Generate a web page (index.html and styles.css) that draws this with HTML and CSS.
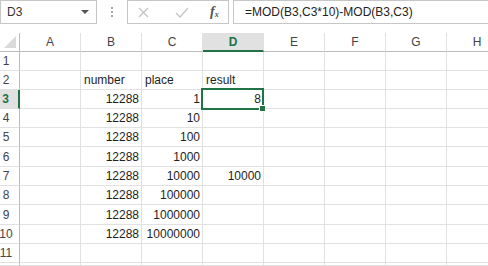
FILE: index.html
```html
<!DOCTYPE html>
<html lang="en">
<head>
  <meta charset="UTF-8" />
  <title>MOD</title>
  <link rel="stylesheet" href="styles.css">
</head>
<body>
  <div class="formula-bar">
    <div class="name-box">
      <span>D3</span>
      <span class="arrow"></span>
    </div>
    <div class="grip"><i></i><i></i><i></i></div>
    <div class="buttons">
      <svg class="btn-cancel" width="11" height="11" viewBox="0 0 11 11"><path d="M1 1L10 10M10 1L1 10" stroke="#c4c4c4" stroke-width="1.3" fill="none"/></svg>
      <svg class="btn-enter" width="14" height="11" viewBox="0 0 14 11"><path d="M1 6L5 10L13 1" stroke="#c4c4c4" stroke-width="1.3" fill="none"/></svg>
      <span class="fx"><i>f</i><sub>x</sub></span>
    </div>
    <div class="formula">=MOD(B3,C3*10)-MOD(B3,C3)</div>
  </div>

  <div class="sheet" id="sheet"></div>

  <script>
    const cols = ['A', 'B', 'C', 'D', 'E', 'F', 'G', 'H'];
    const places = [1, 10, 100, 1000, 10000, 100000, 1000000, 10000000];
    const data = { 2: { B: 'number', C: 'place', D: 'result' } };
    places.forEach((p, i) => {
      data[i + 3] = { B: 12288, C: p };
    });
    data[3].D = 8;
    data[7].D = 10000;

    let html = `<div class="head corner"><svg width="14" height="14" viewBox="0 0 14 14"><path d="M13 1V13H1Z" fill="#dadada"/></svg></div>`;
    html += cols.map(c => `<div class="head col-head${c === 'D' ? ' active' : ''}">${c}</div>`).join('');

    // row 12 only peeks in at the bottom edge, so no label
    for (let r = 1; r <= 12; r++) {
      html += `<div class="head row-head${r === 3 ? ' active' : ''}">${r < 12 ? r : ''}</div>`;
      html += cols.map(c => {
        const v = data[r] && data[r][c] !== undefined ? data[r][c] : '';
        const cls = ['cell'];
        if (typeof v === 'number') cls.push('num');
        if (r === 3 && c === 'D') cls.push('selected');
        const extra = r === 3 && c === 'D' ? '<span class="handle"></span>' : '';
        return `<div class="${cls.join(' ')}">${v}${extra}</div>`;
      }).join('');
    }

    document.getElementById('sheet').innerHTML = html;
  </script>
</body>
</html>
```

FILE: styles.css
```css
:root {
  --grid: #e1e1e1;
  --head-line: #bcbcbc;
  --box-line: #c6c6c6;
  --green: #217346;
  --text: #1e1e1e;
  --head-text: #444444;
}

body {
  margin: 0;
  font-family: "Liberation Sans", Arial, sans-serif;
  font-size: 12px;
  color: var(--text);
  background: #ffffff;
  overflow: hidden;
  height: 266px;
}

/* formula bar */

.formula-bar {
  display: flex;
  height: 24px;
}

.name-box {
  box-sizing: border-box;
  width: 97px;
  border: 1px solid var(--box-line);
  display: flex;
  align-items: center;
  justify-content: space-between;
  padding: 0 6px 0 6px;
  color: #333;
}

.arrow {
  width: 0;
  height: 0;
  border-left: 4px solid transparent;
  border-right: 4px solid transparent;
  border-top: 4px solid #555;
  margin-right: 1px;
}

.grip {
  width: 30px;
  display: flex;
  flex-direction: column;
  align-items: center;
  justify-content: center;
  gap: 2px;
}

.grip i {
  width: 2px;
  height: 2px;
  background: #a6a6a6;
}

.buttons {
  box-sizing: border-box;
  width: 102px;
  border: 1px solid var(--box-line);
  display: flex;
  align-items: center;
  padding-left: 10px;
}

.btn-enter {
  margin-left: 26px;
}

.fx {
  margin-left: 21px;
  font-family: "Liberation Serif", serif;
  font-size: 14px;
  color: #555;
  font-weight: bold;
}

.fx sub {
  font-size: 8px;
  font-style: italic;
  vertical-align: -1px;
}

.formula {
  box-sizing: border-box;
  flex: 1;
  margin-left: 4px;
  border: 1px solid var(--box-line);
  border-right: none;
  display: flex;
  align-items: center;
  padding-left: 11px;
  color: #222;
}

/* sheet grid */

.sheet {
  margin-top: 9px;
  display: grid;
  grid-template-columns: 20px repeat(8, 61px);
  grid-template-rows: 19px 19px 19px 19px 19px 19px 20px 19px 19px 20px 19px 19px 3px;
  width: 508px;
}

.head {
  box-sizing: border-box;
  display: flex;
  align-items: center;
  justify-content: center;
  color: var(--head-text);
  border-right: 1px solid var(--grid);
  border-bottom: 1px solid var(--grid);
}

.col-head {
  border-bottom-color: var(--head-line);
}

.corner {
  border-right-color: var(--head-line);
  border-bottom-color: var(--head-line);
  justify-content: flex-end;
  align-items: flex-end;
  padding: 0 2px 2px 0;
}

.row-head {
  border-right-color: var(--head-line);
  padding-right: 7px;
}

.col-head.active {
  background: #e1e1e1;
  color: var(--green);
  font-weight: bold;
  border-bottom: 2px solid var(--green);
}

.row-head.active {
  background: #e1e1e1;
  color: var(--green);
  font-weight: bold;
  border-right: 2px solid var(--green);
}

.cell {
  box-sizing: border-box;
  border-right: 1px solid var(--grid);
  border-bottom: 1px solid var(--grid);
  padding: 0 2px 0 3px;
  display: flex;
  align-items: center;
  white-space: nowrap;
}

.cell.num {
  justify-content: flex-end;
}

.selected {
  position: relative;
}

.selected::after {
  content: "";
  position: absolute;
  left: -2px;
  top: -2px;
  right: -1px;
  bottom: -2px;
  border: 2px solid var(--green);
  z-index: 1;
}

.handle {
  position: absolute;
  right: -3px;
  bottom: -4px;
  width: 5px;
  height: 5px;
  background: var(--green);
  border: 1px solid #fff;
  z-index: 2;
}
```
